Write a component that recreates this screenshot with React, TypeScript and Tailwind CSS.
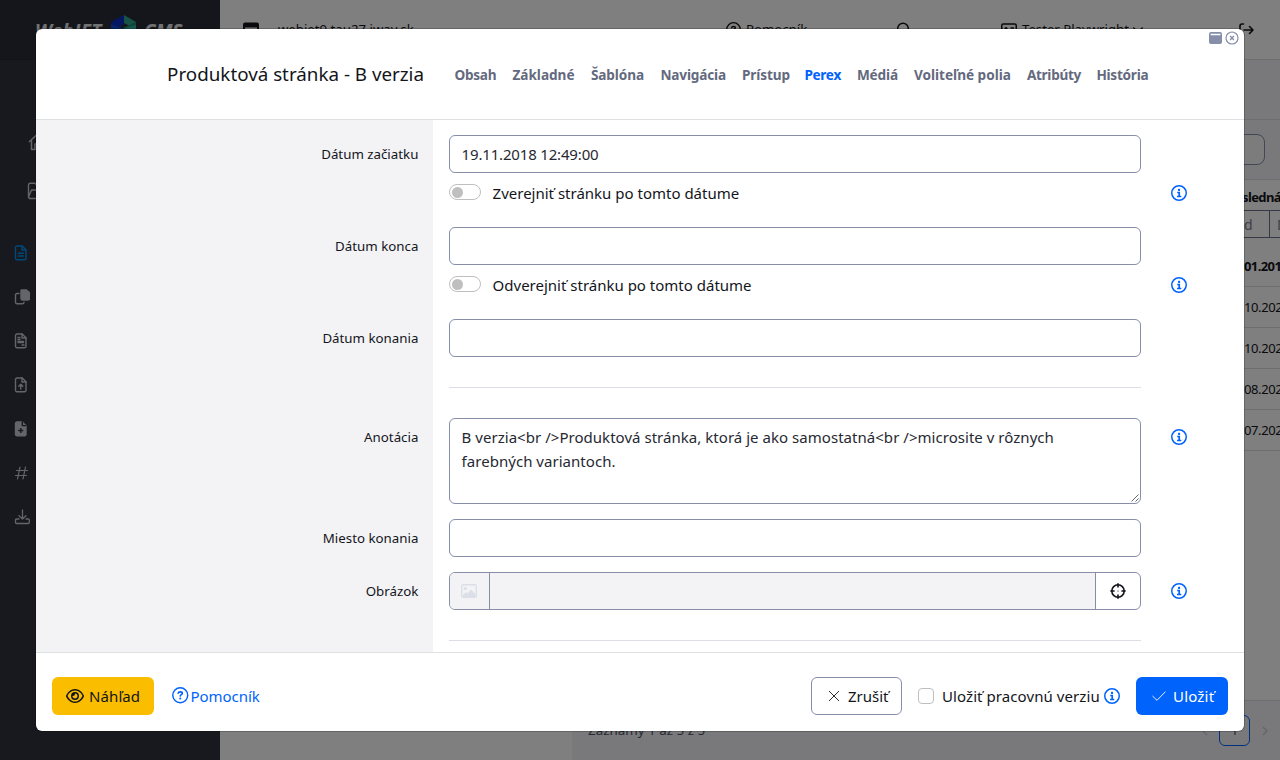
import React from 'react';
import type { ReactNode } from 'react';
import { FaRegEye } from 'react-icons/fa6';

type IconProps = { className?: string };

function InfoIcon({ className = 'size-4' }: IconProps) {
  return (
    <svg viewBox="0 0 16 16" fill="none" stroke="currentColor" className={`shrink-0 text-[#0063fb] ${className}`}>
      <circle cx="8" cy="8" r="7.25" strokeWidth="1.5" />
      <rect x="7" y="3.8" width="2.1" height="2.1" rx="0.6" fill="currentColor" stroke="none" />
      <path d="M6.2 7.5H8.2V11.4M6 11.5H10.3" strokeWidth="1.7" />
    </svg>
  );
}

function HelpIcon({ className = '' }: IconProps) {
  return (
    <svg viewBox="0 0 16 16" fill="none" stroke="currentColor" strokeLinecap="round" className={`shrink-0 ${className}`}>
      <circle cx="8" cy="8" r="7.25" strokeWidth="1.4" />
      <path d="M6 6.1C6.1 5.1 6.9 4.7 8 4.7C9.2 4.7 10 5.2 10 6.2C10 7.4 8 7.4 8 8.7" strokeWidth="1.6" />
      <circle cx="8" cy="11.2" r="1" fill="currentColor" stroke="none" />
    </svg>
  );
}

function SideIcon({ children, className = '' }: { children: ReactNode; className?: string }) {
  return (
    <div className="flex h-11 items-center pl-[14px]">
      <svg
        viewBox="0 0 16 16"
        fill="none"
        stroke="currentColor"
        strokeWidth="1.4"
        strokeLinecap="round"
        strokeLinejoin="round"
        className={`size-4 ${className}`}
      >
        {children}
      </svg>
    </div>
  );
}

const docPath = 'M3 1H8.2L12 4.8V13A1.5 1.5 0 0 1 10.5 14.7H3A1.5 1.5 0 0 1 1.5 13.2V2.5A1.5 1.5 0 0 1 3 1Z';

function Sidebar() {
  return (
    <aside className="flex w-[220px] shrink-0 flex-col bg-[#2f323c] text-[#c9cbd2]">
      <div className="flex h-[60px] items-start border-b border-[#26282f] bg-[#2b2d36] pt-[15px] pl-[35px] text-[#e3e5e8]">
        <span className="w-[69px] pt-[4px] text-[19px] leading-6 font-bold tracking-[0.2px] whitespace-nowrap italic">WebJET</span>
        <svg viewBox="0 0 26 28" className="ml-[7px] h-7 w-[26px]">
          <path d="M0 7L13 0V9L7 13L0 9Z" fill="#0a2fc0" />
          <path d="M13 0L25 7L19 11L13 8Z" fill="#2fa98e" />
          <path d="M25 7V11L15 16L12 13Z" fill="#1d8f7c" />
          <path d="M0 9L13 14V28L0 21Z" fill="#0b4bd0" />
          <path d="M13 14L25 10V21L13 28Z" fill="#2fb39a" />
        </svg>
        <span className="ml-[7px] pt-[4px] text-[19px] leading-6 font-bold italic">CMS</span>
      </div>
      <div className="mt-[70px] flex h-[24px] items-center pl-[28px]">
        <svg viewBox="0 0 18 18" fill="none" stroke="currentColor" strokeWidth="1.5" strokeLinejoin="round" className="size-[18px]">
          <path d="M1 9L9 1.5L17 9M3.5 7.5V16.5H7V11H11V16.5H14.5V7.5" />
        </svg>
      </div>
      <div className="mt-[25px] flex h-6 items-center pl-[27px]">
        <svg viewBox="0 0 18 18" fill="none" stroke="currentColor" strokeWidth="1.4" strokeLinejoin="round" className="size-[18px]">
          <path d="M1.5 15V3A1.7 1.7 0 0 1 3.2 1.3H8L10 3.5H15A1.5 1.5 0 0 1 16.5 5V7.5M1.5 15L4.5 8H17.5L15 16.5H2.5Z" />
        </svg>
      </div>
      <div className="mt-[28px] flex flex-col">
        <SideIcon className="text-[#0091f5]">
          <path d={docPath} />
          <path d="M8 1V5H12M4.2 8.3H9.3M4.2 11H9.3" />
        </SideIcon>
        <SideIcon>
          <path d="M7.5 .9H12.5L15.5 3.7V9.5A1.5 1.5 0 0 1 14 11H8.5A1.5 1.5 0 0 1 7 9.5V2.3A1.4 1.4 0 0 1 7.5 .9Z" fill="currentColor" />
          <path d="M5 4.5H3A1.5 1.5 0 0 0 1.5 6V13.2A1.5 1.5 0 0 0 3 14.7H8.5A1.5 1.5 0 0 0 10 13.2" />
        </SideIcon>
        <SideIcon>
          <path d={docPath} />
          <path d="M8 1V5H12M4 4.5H6M4 6.5H6M4 8.5H9.5M4 9.5H9.5M8 12H10" />
        </SideIcon>
        <SideIcon>
          <path d={docPath} />
          <path d="M8 1V5H12M6.8 12V7.5M4.8 9.3L6.8 7.3L8.8 9.3" />
        </SideIcon>
        <SideIcon>
          <path d={docPath} fill="currentColor" />
          <path d="M8.3 .6V4.6H12.4M6.8 7V12M4.3 9.5H9.3" stroke="#2f323c" strokeLinecap="butt" />
        </SideIcon>
        <SideIcon>
          <path d="M6 2L3.5 14M11.5 2L9 14M2.5 5.5H13.5M1.5 10.5H12.5" strokeWidth="1.2" />
        </SideIcon>
        <SideIcon>
          <path d="M8.5 1V10M5 6.8L8.5 10L12 6.8M5 10H2.5A1 1 0 0 0 1.5 11V13.5A1 1 0 0 0 2.5 14.5H14.3A1 1 0 0 0 15.3 13.5V11A1 1 0 0 0 14.3 10H12" strokeWidth="1.3" />
        </SideIcon>
      </div>
    </aside>
  );
}

function TopBar() {
  return (
    <header className="flex h-[60px] shrink-0 items-center border-b border-[#dcdde2] bg-white pl-[23px] text-[13.2px] text-[#141519]">
      <svg viewBox="0 0 16 16" className="size-4">
        <rect x="0" y="0.5" width="16" height="14.5" rx="2" fill="#141519" />
        <rect x="2" y="5.5" width="12" height="7" fill="#fff" />
      </svg>
      <span className="ml-[19px] w-[134px] whitespace-nowrap">webjet9.tau27.iway.sk</span>
      <HelpIcon className="ml-[314px] size-[15px]" />
      <span className="ml-[5px] w-[61px]">Pomocník</span>
      <svg viewBox="0 0 16 16" fill="none" stroke="currentColor" strokeWidth="1.5" className="ml-[89px] size-4">
        <circle cx="7" cy="6.5" r="5.3" />
        <path d="M11 10.5L15 15" />
      </svg>
      <svg viewBox="0 0 16 16" fill="none" stroke="currentColor" strokeWidth="1.5" className="ml-[89px] size-4">
        <rect x="0.75" y="2" width="14.5" height="12" rx="1.5" />
        <circle cx="5" cy="6.5" r="1.6" fill="currentColor" stroke="none" />
        <path d="M2.5 11.5C3 9 7 9 7.5 11.5M9.5 6H13M9.5 9H13" />
      </svg>
      <span className="ml-[5px] w-[107px] whitespace-nowrap">Tester Playwright</span>
      <svg viewBox="0 0 14 8" fill="none" stroke="currentColor" strokeWidth="1.5" className="ml-[3px] h-2 w-[12px]">
        <path d="M1.5 1L7 6.5L12.5 1" />
      </svg>
      <svg viewBox="0 0 16 14" fill="none" stroke="currentColor" strokeWidth="1.6" strokeLinecap="round" strokeLinejoin="round" className="ml-[95px] h-[14px] w-4">
        <path d="M4.5 1H3A2 2 0 0 0 1 3V10A2 2 0 0 0 3 12H4.5M5 7H14M10.5 3.5L14 7L10.5 10.5" />
      </svg>
    </header>
  );
}

const dates = ['10.202', '10.202', '08.202', '07.202'];

function Background() {
  return (
    <div className="flex h-[760px] w-[1280px]">
      <Sidebar />
      <div className="flex w-[1060px] flex-col">
        <TopBar />
        <div className="flex min-h-0 flex-1">
          <div className="w-[352px] shrink-0 bg-white" />
          <main className="flex min-w-0 flex-1 flex-col bg-white text-[13px] text-[#141519]">
            <div className="h-[60px] shrink-0 border-b border-[#dcdde2] bg-[#f3f3f6]" />
            <div className="flex h-[60px] shrink-0 items-center justify-end border-b border-[#dcdde2] bg-[#f3f3f6] pr-[15px]">
              <div className="h-[31px] w-[120px] rounded-lg border border-[#868eaa] bg-[#f8f8fa]" />
            </div>
            <div className="ml-auto flex w-[52px] flex-col overflow-hidden">
              <div className="flex h-[30px] items-center pt-[6px] pl-[14px] font-bold tracking-[-0.6px]">slednán</div>
              <div className="flex h-7 items-center border-y border-[#6d738a] text-[14px] text-[#7c8090]">
                <span className="flex h-full w-[42px] shrink-0 items-center border-r border-[#6d738a] pl-4">d</span>
                <span className="pl-[7px]">D</span>
              </div>
              <div className="flex h-[49px] items-center border-b border-[#dcdde2] pt-[10px] pl-4 font-bold tracking-[-0.6px]">01.201</div>
              {dates.map((d, i) => (
                <div key={i} className="flex h-[41px] items-center border-b border-[#dcdde2] pt-[2px] pl-4 tracking-[-0.4px]">{d}</div>
              ))}
            </div>
            <div className="mt-auto flex h-[60px] items-center border-t border-[#dcdde2] bg-[#f3f3f6] pl-4 text-[13.4px] text-[#4f5263]">
              <span className="w-[130px]">Záznamy 1 až 5 z 5</span>
              <svg viewBox="0 0 6 10" fill="none" stroke="#c9cbd6" strokeWidth="1.4" className="ml-[484px] h-[10px] w-[6px]">
                <path d="M5 1L1 5L5 9" />
              </svg>
              <span className="ml-[11px] flex h-[31px] w-[31px] items-center justify-center rounded-[6px] border border-[#0063fb]">1</span>
              <svg viewBox="0 0 6 10" fill="none" stroke="#c9cbd6" strokeWidth="1.4" className="ml-[12px] h-[10px] w-[6px]">
                <path d="M1 1L5 5L1 9" />
              </svg>
            </div>
          </main>
        </div>
      </div>
    </div>
  );
}

function Tabs() {
  const base = 'whitespace-nowrap';
  return (
    <nav className="flex gap-4 text-[13.6px] leading-5 font-bold text-[#63697e]">
      <span className={`${base} w-[42px] tracking-[-0.25px]`}>Obsah</span>
      <span className={`${base} w-[62.5px]`}>Základné</span>
      <span className={`${base} w-[53.5px] tracking-[-0.1px]`}>Šablóna</span>
      <span className={`${base} w-[65.5px] tracking-[-0.15px]`}>Navigácia</span>
      <span className={`${base} w-[46.5px] tracking-[-0.1px]`}>Prístup</span>
      <span className={`${base} w-[36.5px] tracking-[-0.3px] text-[#0063fb]`}>Perex</span>
      <span className={`${base} w-[41px] tracking-[-0.1px]`}>Médiá</span>
      <span className={`${base} w-[97px]`}>Voliteľné polia</span>
      <span className={`${base} w-[53.5px] tracking-[-0.3px]`}>Atribúty</span>
      <span className={`${base} w-[52px] tracking-[-0.25px]`}>História</span>
    </nav>
  );
}

type RowProps = { label?: string; info?: boolean; infoClass?: string; className: string; children: ReactNode };

function Row({ label, info, infoClass = 'pt-[26px]', className, children }: RowProps) {
  return (
    <div className={`flex shrink-0 ${className}`}>
      <div className="w-[397.4px] shrink-0 bg-[#f3f3f6] pt-[23px] pr-[15px] text-right text-[13.3px] leading-[22px] text-[#13151b]">
        {label}
      </div>
      <div className="w-[707.6px] shrink-0 pt-[15px] pl-[15.2px]">{children}</div>
      <div className={`pl-[30px] ${infoClass}`}>{info && <InfoIcon />}</div>
    </div>
  );
}

const field = 'flex w-full rounded-[6px] border border-[#868eaa] bg-white text-[15px] text-[#272932]';

function Toggle({ text }: { text: string }) {
  return (
    <div className="mt-[11px] flex items-start">
      <span className="flex h-4 w-8 items-center rounded-full border border-[#bfbfbf] pl-[2px]">
        <span className="size-[11px] rounded-full bg-[#bfbfbf]" />
      </span>
      <span className="-mt-[2px] ml-3 text-[15px] leading-[22px] whitespace-nowrap text-[#13151b]">{text}</span>
    </div>
  );
}

function Divider() {
  return <div className="mt-[15px] h-px bg-[#dcdee6]" />;
}

function Modal() {
  return (
    <div className="absolute top-[29px] left-[36px] flex h-[702px] w-[1208px] flex-col overflow-hidden rounded-[6px] bg-white ring-1 ring-black/20">
      <div className="flex h-[91px] shrink-0 items-start border-b border-[#dfe0e4]">
        <h1 className="mt-[31px] w-[388px] text-right text-[18.8px] leading-7 whitespace-nowrap text-[#13151b]">
          Produktová stránka - B verzia
        </h1>
        <div className="mt-[36px] ml-[30.4px]">
          <Tabs />
        </div>
        <div className="mt-[2px] mr-[5px] ml-auto flex items-center gap-[3.5px] text-[#868eaa]">
          <svg viewBox="0 0 13 12" className="h-3 w-[13px]">
            <rect width="13" height="12" rx="2" fill="currentColor" />
            <rect x="1.5" y="1.7" width="10" height="1.6" rx="0.5" fill="#fff" />
          </svg>
          <svg viewBox="0 0 14 14" fill="none" stroke="currentColor" className="size-[14px]">
            <circle cx="7" cy="7" r="6" strokeWidth="1.2" />
            <path d="M5.1 5.1L8.9 8.9M8.9 5.1L5.1 8.9" strokeWidth="1.4" />
          </svg>
        </div>
      </div>

      <div className="flex min-h-0 flex-1 flex-col overflow-hidden">
        <Row label="Dátum začiatku" className="h-[92px]" info infoClass="pt-[65px]">
          <div className={`${field} h-[38px] items-center pl-3 tracking-[-0.17px]`}>19.11.2018 12:49:00</div>
          <Toggle text="Zverejniť stránku po tomto dátume" />
        </Row>
        <Row label="Dátum konca" className="h-[92px]" info infoClass="pt-[65px]">
          <div className={`${field} h-[38px]`} />
          <Toggle text="Odverejniť stránku po tomto dátume" />
        </Row>
        <Row label="Dátum konania" className="h-[53px]">
          <div className={`${field} h-[38px]`} />
        </Row>
        <Row className="h-[46px]">
          <Divider />
        </Row>
        <Row label="Anotácia" className="h-[101px]" info>
          <div className={`${field} relative h-[86px] pt-[6px] pl-3 leading-6 tracking-[0.035px]`}>
            <p>
              B verzia&lt;br /&gt;Produktová stránka, ktorá je ako samostatná&lt;br /&gt;microsite v rôznych
              <br />
              farebných variantoch.
            </p>
            <svg viewBox="0 0 8 8" stroke="#555" strokeWidth="0.9" className="absolute right-[1px] bottom-[1px] size-2">
              <path d="M0.5 7.5L7.5 0.5M4.5 7.5L7.5 4.5" />
            </svg>
          </div>
        </Row>
        <Row label="Miesto konania" className="h-[53px]">
          <div className={`${field} h-[38px]`} />
        </Row>
        <Row label="Obrázok" className="h-[53px]" info>
          <div className={`${field} h-[38px] overflow-hidden`}>
            <span className="flex w-[40.5px] items-center justify-center border-r border-[#868eaa] bg-[#f3f3f6]">
              <svg viewBox="0 0 16 14" className="h-[14px] w-4 text-[#dcdee8]">
                <rect x="0.7" y="0.7" width="14.6" height="12.6" rx="1.6" fill="none" stroke="currentColor" strokeWidth="1.4" />
                <circle cx="4.3" cy="4.4" r="1.5" fill="currentColor" />
                <path d="M2 13V11L5.2 8L6.7 9.4L10 5.5L14.5 10.5V13Z" fill="currentColor" />
              </svg>
            </span>
            <span className="flex-1 bg-[#f3f3f6]" />
            <span className="flex w-[45px] items-center justify-center border-l border-[#868eaa]">
              <svg viewBox="0 0 16 16" fill="none" stroke="#13151b" strokeWidth="1.6" className="size-4">
                <circle cx="8" cy="8" r="6.2" />
                <path d="M8 0.3V4.6M8 11.4V15.7M0.3 8H4.6M11.4 8H15.7" />
                <circle cx="8" cy="8" r="0.6" fill="#13151b" stroke="none" />
              </svg>
            </span>
          </div>
        </Row>
        <Row className="h-[46px]">
          <Divider />
        </Row>
      </div>

      <div className="flex h-[79px] shrink-0 items-center border-t border-[#dfe0e4] px-4 pt-[7px] text-[15px] text-[#13151b]">
        <button className="flex h-[38px] w-[101.5px] items-center rounded-[6px] bg-[#fabd00] pl-[14px]">
          <FaRegEye size={16} className="h-4 w-[18px]" />
          <span className="ml-[5px] pt-px tracking-[0.1px]">Náhľad</span>
        </button>
        <span className="ml-[18.5px] flex items-center text-[#0063fb]">
          <HelpIcon className="size-[16.5px]" />
          <span className="ml-[2px] pt-px tracking-[-0.05px]">Pomocník</span>
        </span>
        <button className="ml-auto flex h-[38px] w-[91px] items-center rounded-[6px] border border-[#868eaa] pl-4">
          <svg viewBox="0 0 12 12" stroke="currentColor" strokeWidth="0.9" className="size-3">
            <path d="M1 1L11 11M11 1L1 11" />
          </svg>
          <span className="ml-[8px] pt-px">Zrušiť</span>
        </button>
        <span className="ml-4 size-4 rounded-[4px] border border-[#bfbfbf]" />
        <span className="ml-[8px] w-[158px] pt-px tracking-[0.08px] whitespace-nowrap">Uložiť pracovnú verziu</span>
        <InfoIcon className="ml-1 size-4" />
        <button className="ml-4 flex h-[38px] w-[92px] items-center rounded-[6px] bg-[#0063fb] pl-4 text-white">
          <svg viewBox="0 0 14 10" fill="none" stroke="currentColor" strokeWidth="0.9" className="h-[10px] w-[14px]">
            <path d="M0.5 5L5 9.3L13.5 0.6" />
          </svg>
          <span className="ml-[7px] pt-px tracking-[0.2px]">Uložiť</span>
        </button>
      </div>
    </div>
  );
}

export default function App() {
  return (
    <div className="relative h-[760px] w-[1280px] overflow-hidden font-['Noto_Sans',sans-serif]">
      <Background />
      <div className="absolute inset-0 bg-black/50" />
      <Modal />
    </div>
  );
}
